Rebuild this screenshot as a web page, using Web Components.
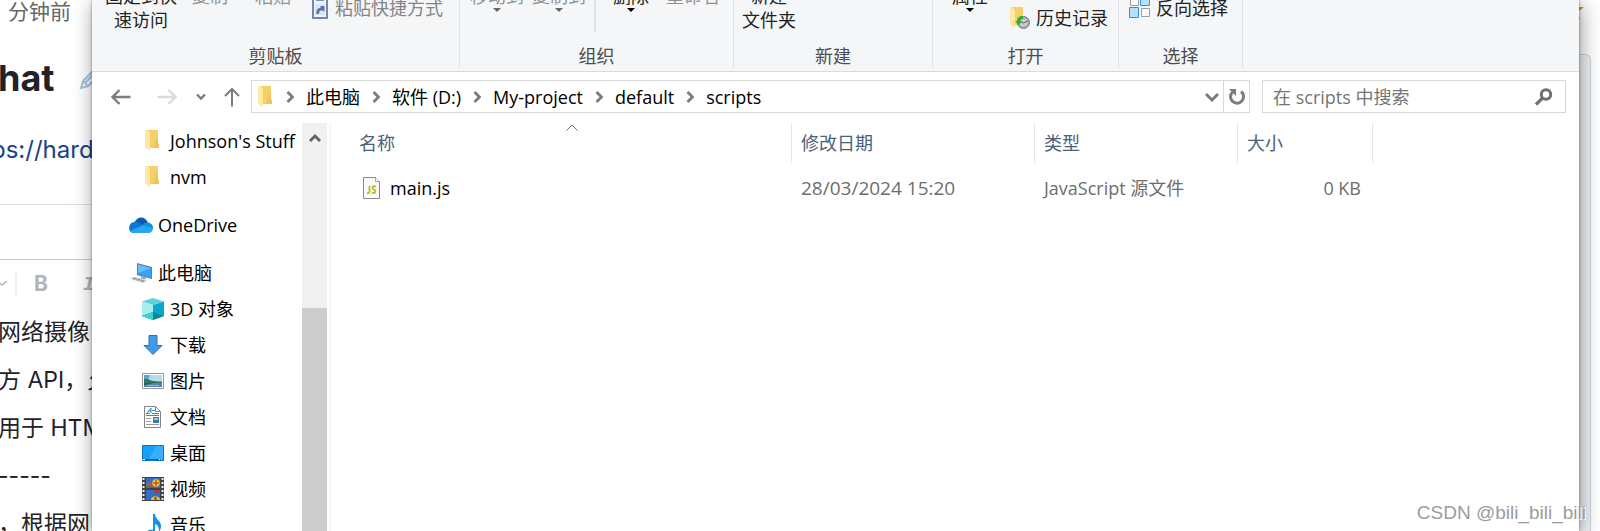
<!DOCTYPE html>
<html lang="zh-CN">
<head>
<meta charset="UTF-8">
<meta name="viewport" content="width=device-width, initial-scale=1">
<title>scripts</title>
<style>
    html, body {
        height: 100%;
        margin: 0;
        overflow: hidden;
    }
    body {
        position: relative;
        background: #fff;
        color: #000;
        font: 18px/24px "Open Sans", "Noto Sans CJK SC", sans-serif;
    }
    file-window {
        position: absolute;
        inset: 0 21px 0 92px;
    }
    .watermark {
        position: absolute;
        right: 14px;
        bottom: 6px;
        font: 19px/24px "Liberation Sans", sans-serif;
        color: #9c9c9c;
        text-shadow: 1px 1px 0 #fff;
    }
</style>
</head>
<body>
<article-page></article-page>

<file-window>
    <ribbon-group slot="ribbon" label="剪贴板" style="--w: 368px; --start: 12px">
        <ribbon-button top="固定到快" bottom="速访问" style="--bw: 74px"></ribbon-button>
        <ribbon-button top="复制" muted style="--bw: 64px"></ribbon-button>
        <ribbon-button top="粘贴" muted style="--bw: 62px"></ribbon-button>
        <ribbon-small icon="shortcut" text="粘贴快捷方式" muted style="--drop: 12px"></ribbon-small>
    </ribbon-group>
    <ribbon-group slot="ribbon" label="组织" style="--w: 274px; --start: 6px">
        <ribbon-button top="移动到" arrow muted style="--bw: 62px"></ribbon-button>
        <ribbon-button top="复制到" arrow muted style="--bw: 62px"></ribbon-button>
        <ribbon-line></ribbon-line>
        <ribbon-button top="删除" arrow style="--bw: 62px"></ribbon-button>
        <ribbon-button top="重命名" muted style="--bw: 62px"></ribbon-button>
    </ribbon-group>
    <ribbon-group slot="ribbon" label="新建" style="--w: 199px; --start: 4px">
        <ribbon-button top="新建" bottom="文件夹" style="--bw: 62px"></ribbon-button>
    </ribbon-group>
    <ribbon-group slot="ribbon" label="打开" style="--w: 186px; --start: 6px">
        <ribbon-button top="属性" arrow style="--bw: 62px"></ribbon-button>
        <ribbon-small icon="history" text="历史记录" style="--drop: 2px"></ribbon-small>
    </ribbon-group>
    <ribbon-group slot="ribbon" label="选择" style="--w: 124px; --start: 2px">
        <ribbon-small icon="invert" text="反向选择" style="--drop: 12px"></ribbon-small>
    </ribbon-group>

    <address-bar slot="address" path="此电脑|软件 (D:)|My-project|default|scripts"></address-bar>

    <nav-item slot="tree" icon="folder" level="2">Johnson's Stuff</nav-item>
    <nav-item slot="tree" icon="folder" level="2">nvm</nav-item>
    <nav-item slot="tree" icon="cloud" level="1">OneDrive</nav-item>
    <nav-item slot="tree" icon="computer" level="1">此电脑</nav-item>
    <nav-item slot="tree" icon="cube" level="2">3D 对象</nav-item>
    <nav-item slot="tree" icon="download" level="2">下载</nav-item>
    <nav-item slot="tree" icon="picture" level="2">图片</nav-item>
    <nav-item slot="tree" icon="document" level="2">文档</nav-item>
    <nav-item slot="tree" icon="desktop" level="2">桌面</nav-item>
    <nav-item slot="tree" icon="video" level="2">视频</nav-item>
    <nav-item slot="tree" icon="music" level="2">音乐</nav-item>

    <file-list slot="files"></file-list>
</file-window>

<div class="watermark">CSDN @bili_bili_bili</div>

<script>
    // icon name -> [width, height, drawing]
    const ICONS = {
        folder: [14, 22, `<path d="M3 0h10v13l1 1v4H3z" fill="#f5cf69"/><path d="M11 8h2v6h1v4H8z" fill="#efc458"/><path d="M0 0h2l3 2.500V21L0 17.500z" fill="#ffe9a2"/>`],
        cloud: [24, 16, `<path d="M5 7C7-1 16-2 19 6l-6 4z" fill="#0a5cb4"/><path d="M5.500 5C10 4 13 9 16 10L5 16C-2 16-1 5 5.500 5z" fill="#0f78d4"/><path d="M13 8.500C17 4 24 5 24 11c0 3-2 5-5 5H5c-1 0-3-1-4-2z" fill="#28a8ea"/><path d="M13 8.500C15 6 17 5.500 19 5.700c3 .3 5 3 5 5.300z" fill="#1490df"/>`],
        computer: [24, 22, `<path d="M8 1l15 4v12L8 13z" fill="#5a7f9f"/><path d="M9 2.500l13 3.500v9.500L9 12z" fill="#36a5f5"/><path d="M9 2.500l13 3.500-13 5z" fill="#69bdfb"/><path d="M12 14l5 1.500v2l-5-1z" fill="#a3a8ad"/><path d="M1 16.500l4-1.500 13 3.500-4 2.500z" fill="#c3c9ce"/><path d="M4 16l11 3M7 16l-3 2M11 17l-3 2M15 18l-3 2" stroke="#858d94" stroke-width=".7"/>`],
        cube: [22, 22, `<path d="M0 3.500L11 0l11 3.500L11 7z" fill="#5fd3dc"/><path d="M0 3.500L11 7v15L0 18z" fill="#a5eef0"/><path d="M22 3.500L11 7v15l11-4z" fill="#08a9cd"/><path d="M0 18l11-4 11 4-11 4z" fill="#10849a"/><path d="M0 18l11-4v8z" fill="#3bced5"/>`],
        download: [22, 22, `<path d="M7 1.500h8v10h5L11 20.500 2 11.500h5z" fill="#3f9bea" stroke="#2376ba"/>`],
        picture: [22, 22, `<path d="M.5 3.500h21v15H.5z" fill="#fff" stroke="#969696"/><path d="M2 5h18v12H2z" fill="#5ba5df"/><path d="M8 5h12v6H6z" fill="#b8daf0"/><path d="M2 9c4-1 5 2 10 2 3 1 6 1 8 1v1H2z" fill="#38755b"/><path d="M2 13h18v4H2z" fill="#4f84ad"/><path d="M2 13c3 0 6 0 9-1v1c-3 1-6 2-9 2z" fill="#2e5c55"/><path d="M5 15h12v1H5z" fill="#8ab6cf"/>`],
        document: [22, 22, `<path d="M2.500.5h11l5 5v16h-16z" fill="#fff" stroke="#858585"/><path d="M13.500.5v5h5" fill="none" stroke="#858585"/><path d="M4 7.500h4M5 7l4-5v5M6 5h3M10 4.500h3M10 7.500h7M4 9.500h13" fill="none" stroke="#288ecf"/><path d="M4 12.500h5M4 15.500h5M4 18.500h13" stroke="#9a9a9a"/><path d="M11 11h6v6h-6z" fill="#3e7898"/><path d="M12 12h4v2h-4z" fill="#9fcae7"/>`],
        desktop: [22, 22, `<path d="M.5 3.500h21v15H.5z" fill="#16a0fb" stroke="#0876bb"/><path d="M14 4h7v13H7z" fill="#37affc"/><path d="M1 17.500h20" stroke="#07569a"/><path d="M1 17.500h2M17 17.500h1M19 17.500h1" stroke="#fff"/>`],
        video: [22, 24, `<path d="M0 0h22v24H0z" fill="#414141"/><path d="M1.500 1v22M20.500 1v22" stroke="#eee" stroke-width="2" stroke-dasharray="2 2"/><path d="M4 1h14v10H4zM4 13h14v10H4z" fill="#366ec7"/><path d="M4 8l3-3 4 4v1H4z" fill="#d64657"/><circle cx="14" cy="6" r="3.800" fill="#f0c42d"/><path d="M14 3v6M11 6h6" stroke="#a93226"/><path d="M12 10h3v1h-3zM4 9h6v2H4z" fill="#318851"/><path d="M12 13h6l-3 4z" fill="#c3302f"/><path d="M9 23c0-5 9-5 9 0z" fill="#f1bf29"/><path d="M13.500 20v3" stroke="#b62e24" stroke-width="2"/>`],
        music: [22, 24, `<path d="M11 1h2c0 5 6 6 6 12 0 3-1 4-2 6 0-5-1-7-4-8v8c0 5-8 5-8 1 0-3 3-4 6-3z" fill="#1592e5"/>`],
        js: [18, 22, `<path d="M.5.5h12l4 4v17H.5z" fill="#f9f9f9" stroke="#898989"/><path d="M12.500.5v4h4" fill="#fff" stroke="#a5a5a5"/><path d="M6.500 9v5.500c0 1.500-1 2-2.500 1.500M13 9.800c-3-1.500-5 1.200-2 2.700 3 1.500 1 4.500-2 3" fill="none" stroke="#b7bb2d" stroke-width="1.800"/>`],
        shortcut: [17, 24, `<path d="M1 2h14v20H1z" fill="#eef3f9" stroke="#7187ad" stroke-width="2"/><path d="M4 0h8v5H4z" fill="#8295b8"/><path d="M3 8h10v11H3z" fill="#dce6f3"/><path d="M4.500 18c-.5-4 1-6 4-6v-2h4v6l-1.500-1.500C8 14 7 15 7 18z" fill="#5877a8"/>`],
        history: [21, 24, `<path d="M3 1h11v18H3z" fill="#f5cf69"/><path d="M1 1h2l3 3v18l-5-3z" fill="#ffe9a2"/><circle cx="14.500" cy="16.500" r="6" fill="#a4a9ab" stroke="#777d80"/><circle cx="14.500" cy="16.500" r="4" fill="#c6cacb"/><path d="M11 15l3.500 2 4-2" fill="none" stroke="#5b6062"/><path d="M14 10c-4 0-6 2-6 5H6l4 4 3-4h-2c0-1 1-2 3-2z" fill="#2eae3c"/>`],
        invert: [21, 24, `<path d="M1.500 1.500h8v8h-8z" fill="#fafafa" stroke="#9c9c9c"/><path d="M11.500 .5h9v9h-9z" fill="#b7e0ff" stroke="#2e91dd"/><path d="M.5 11.500h9v10h-9z" fill="#b7e0ff" stroke="#2e91dd"/><path d="M12.500 12.500h8v8h-8z" fill="#fafafa" stroke="#9c9c9c"/>`],
        back: [20, 18, `<path d="M19.500 9H2M8.500 2L1.500 9l7 7" fill="none" stroke="#7c7c7c" stroke-width="2.400"/>`],
        forward: [20, 18, `<path d="M.5 9H18M11.500 2l7 7-7 7" fill="none" stroke="#dadada" stroke-width="2.400"/>`],
        recent: [10, 8, `<path d="M1 1.500l4 4 4-4" fill="none" stroke="#7c7c7c" stroke-width="2.400"/>`],
        up: [16, 20, `<path d="M8 19.500V2M1 9l7-7 7 7" fill="none" stroke="#7c7c7c" stroke-width="2"/>`],
        crumb: [8, 12, `<path d="M1.500 1l5 5-5 5" fill="none" stroke="#7c7c7c" stroke-width="2.800"/>`],
        down: [14, 10, `<path d="M1 2l6 6 6-6" fill="none" stroke="#7c7c7c" stroke-width="3"/>`],
        refresh: [18, 18, `<path d="M13 3.500a6.500 6.500 0 1 1-8.500 .5" fill="none" stroke="#7c7c7c" stroke-width="3"/><path d="M1 1h7v7z" fill="#7c7c7c"/>`],
        search: [18, 18, `<circle cx="11" cy="6.500" r="4.700" fill="none" stroke="#707070" stroke-width="3"/><path d="M7.500 10L1 16.500" stroke="#707070" stroke-width="3.200"/>`],
        scroll: [12, 10, `<path d="M1 8l5-5 5 5" fill="none" stroke="#606060" stroke-width="2.800"/>`],
        sort: [12, 7, `<path d="M.5 6.500L6 1l5.500 5.500" fill="none" stroke="#707070"/>`],
        pencil: [24, 24, `<path d="M2 22l2-7L17 2l5 5L9 20zM4 15l5 5M6 17L18 5" fill="none" stroke="#a9c4dc" stroke-width="2"/>`],
        star: [20, 20, `<path d="M10 0l3 7h7l-6 5 2 8-6-5-6 5 2-8-6-5h7z" fill="#e2940c"/>`],
        caret: [8, 6, `<path d="M-3 0l5 4 5-4" fill="none" stroke="#b4b4b4" stroke-width="1.500"/>`],
    };

    function icon(name) {
        const [w, h, body] = ICONS[name];
        return `<svg width="${w}" height="${h}" viewBox="0 0 ${w} ${h}" aria-hidden="true">${body}</svg>`;
    }

    // Shared reset for the buttons and links inside the shadow roots
    const BASE = `
        :host, * { box-sizing: border-box; }
        svg { display: block; flex: none; }
        button { margin: 0; padding: 0; border: 0; background: none; font: inherit; color: inherit; }
        a { color: inherit; text-decoration: none; }
    `;

    // The web page that stays visible around the window
    class ArticlePage extends HTMLElement {
        constructor() {
            super();
            this.attachShadow({ mode: 'open' });
            this.shadowRoot.innerHTML = `
                <style>
                    ${BASE}
                    :host {
                        display: grid;
                        grid-template-columns: 1fr 30px;
                        height: 100%;
                        overflow: hidden;
                        color: #1f2328;
                        font-family: Inter, "Noto Sans CJK SC", sans-serif;
                    }
                    main { white-space: nowrap; overflow: hidden; }
                    .time { height: 48px; padding-left: 8px; font-size: 21px; line-height: 24px; color: #666; }
                    .title { display: flex; align-items: center; gap: 24px; height: 60px; }
                    h1 { margin: 0 0 0 -2px; font-size: 36px; line-height: 60px; font-weight: 700; }
                    .link { height: 97px; margin-left: -9px; padding-top: 24px; font-size: 24px; line-height: 36px; color: #15438b; border-bottom: 1px solid #d8e0e8; }
                    .gap { height: 55px; border-bottom: 1px solid #b9c9d6; }
                    .tools { display: flex; align-items: center; height: 48px; font-size: 21px; color: #b4b4b4; }
                    .tools button { width: 48px; text-align: center; }
                    .tools span { width: 9px; height: 24px; border-right: 2px solid #eee; }
                    b { font-weight: 700; }
                    i { font-family: "Liberation Mono", monospace; font-weight: 700; }
                    p { margin: 0 0 0 -2px; font-size: 23px; line-height: 48px; }
                    aside { display: flex; flex-direction: column; background: #fff; }
                    .star { height: 54px; margin-left: -6px; }
                    .panel { flex: 1; width: 21px; border: 1px solid #ccd5df; border-left: 0; border-bottom: 0; border-radius: 0 6px 0 0; background: #f3f4f7; }
                </style>
                <main>
                    <div class="time">分钟前</div>
                    <div class="title"><h1>hat</h1>${icon('pencil')}</div>
                    <div class="link"><a href="#">ps://hard</a></div>
                    <div class="gap"></div>
                    <div class="tools">
                        ${icon('caret')}<span></span>
                        <button type="button" aria-label="加粗"><b>B</b></button>
                        <button type="button" aria-label="斜体"><i>I</i></button>
                    </div>
                    <p>网络摄像</p>
                    <p>方 API，允</p>
                    <p>用于 HTML</p>
                    <p>-----</p>
                    <p>，根据网</p>
                </main>
                <aside>
                    <div class="star">${icon('star')}</div>
                    <div class="panel"></div>
                </aside>
            `;
        }
    }

    class FileWindow extends HTMLElement {
        constructor() {
            super();
            this.attachShadow({ mode: 'open' });
            this.shadowRoot.innerHTML = `
                <style>
                    ${BASE}
                    :host {
                        display: flex;
                        flex-direction: column;
                        background: #fff;
                        box-shadow: 0 0 3px rgba(0, 0, 0, .4), 2px 4px 20px rgba(0, 0, 0, .4);
                    }
                    .ribbon {
                        display: flex;
                        flex: none;
                        height: 72px;
                        padding-bottom: 3px;
                        overflow: hidden;
                        background: #f4f6f8;
                        border-bottom: 1px solid #dadbdc;
                    }
                    .content { display: flex; flex: 1; min-height: 0; }
                    .tree { width: 210px; overflow: hidden; }
                    .scroll { display: flex; flex-direction: column; align-items: center; width: 25px; background: #f0f0f0; }
                    .scroll button { display: flex; align-items: center; justify-content: center; width: 25px; height: 29px; flex: none; }
                    .thumb { width: 25px; flex: 1; margin-top: 156px; background: #cdcdcd; }
                    .edge { width: 2px; margin-left: 2px; background: #f7f7f7; }
                    .files { flex: 1; min-width: 0; }
                </style>
                <div class="ribbon"><slot name="ribbon"></slot></div>
                <slot name="address"></slot>
                <div class="content">
                    <nav class="tree"><slot name="tree"></slot></nav>
                    <div class="scroll">
                        <button type="button" aria-label="向上滚动">${icon('scroll')}</button>
                        <div class="thumb"></div>
                    </div>
                    <div class="edge"></div>
                    <div class="files"><slot name="files"></slot></div>
                </div>
            `;
        }
    }

    class RibbonGroup extends HTMLElement {
        constructor() {
            super();
            this.attachShadow({ mode: 'open' });
            this.shadowRoot.innerHTML = `
                <style>
                    ${BASE}
                    :host {
                        display: flex;
                        flex-direction: column;
                        justify-content: flex-end;
                        width: var(--w);
                        border-right: 1px solid #e0e2e4;
                    }
                    .items { display: flex; align-items: flex-end; padding-left: var(--start); color: #222; }
                    .label { padding-top: 12px; text-align: center; color: #4c4c4c; }
                </style>
                <div class="items"><slot></slot></div>
                <div class="label">${this.getAttribute('label')}</div>
            `;
        }
    }

    // Large button: two lines of text, or one line and a drop-down mark
    class RibbonButton extends HTMLElement {
        constructor() {
            super();
            this.attachShadow({ mode: 'open' });
            const muted = this.hasAttribute('muted');
            this.shadowRoot.innerHTML = `
                <style>
                    ${BASE}
                    :host { display: block; width: var(--bw); white-space: nowrap; color: ${muted ? '#929292' : '#222'}; }
                    button { display: flex; flex-direction: column; align-items: center; width: 100%; height: 48px; }
                    .mark { border: solid transparent; border-width: 4px 4px 0; border-top-color: ${muted ? '#666' : '#000'}; }
                </style>
                <button type="button">
                    <span>${this.getAttribute('top')}</span>
                    ${this.hasAttribute('bottom') ? `<span>${this.getAttribute('bottom')}</span>` : ''}
                    ${this.hasAttribute('arrow') ? '<span class="mark"></span>' : ''}
                </button>
            `;
        }
    }

    // Small button: icon on the left, text on the right
    class RibbonSmall extends HTMLElement {
        constructor() {
            super();
            this.attachShadow({ mode: 'open' });
            this.shadowRoot.innerHTML = `
                <style>
                    ${BASE}
                    :host { display: block; padding: 0 0 var(--drop) 8px; white-space: nowrap; color: ${this.hasAttribute('muted') ? '#858585' : '#222'}; }
                    button { display: flex; align-items: center; gap: 6px; }
                </style>
                <button type="button">${icon(this.getAttribute('icon'))}<span>${this.getAttribute('text')}</span></button>
            `;
        }
    }

    class RibbonLine extends HTMLElement {
        constructor() {
            super();
            this.attachShadow({ mode: 'open' });
            this.shadowRoot.innerHTML = `
                <style>
                    :host { display: block; width: 2px; height: 48px; margin: 0 4px; background: #dfe1e3; }
                </style>
            `;
        }
    }

    class AddressBar extends HTMLElement {
        constructor() {
            super();
            this.attachShadow({ mode: 'open' });
            const crumbs = this.getAttribute('path').split('|')
                .map(name => `${icon('crumb')}<a href="#">${name}</a>`)
                .join('');
            this.shadowRoot.innerHTML = `
                <style>
                    ${BASE}
                    :host { display: flex; flex: none; height: 51px; padding: 8px 13px 10px 19px; }
                    .history { display: flex; align-items: center; width: 140px; }
                    .history button:nth-child(2) { margin-left: 26px; }
                    .history button:nth-child(3) { margin-left: 19px; }
                    .history button:nth-child(4) { margin-left: 18px; }
                    .box { display: flex; flex: 1; align-items: center; height: 33px; border: 1px solid #d9d9d9; }
                    .path { display: flex; flex: 1; align-items: center; gap: 12px; padding-left: 6px; white-space: nowrap; }
                    .path svg:first-child { margin-right: 2px; }
                    .reload { display: flex; align-items: center; justify-content: center; width: 26px; height: 31px; margin-left: 4px; border-left: 1px solid #d9d9d9; }
                    .find { display: flex; align-items: center; width: 304px; height: 33px; margin-left: 12px; padding: 0 12px 0 10px; border: 1px solid #d9d9d9; }
                    input { flex: 1; min-width: 0; padding: 0; border: 0; outline: 0; background: none; font: inherit; }
                    input::placeholder { color: #757575; opacity: 1; }
                </style>
                <div class="history">
                    <button type="button" aria-label="后退">${icon('back')}</button>
                    <button type="button" aria-label="前进">${icon('forward')}</button>
                    <button type="button" aria-label="最近浏览的位置">${icon('recent')}</button>
                    <button type="button" aria-label="上移">${icon('up')}</button>
                </div>
                <div class="box">
                    <nav class="path">${icon('folder')}${crumbs}</nav>
                    <button type="button" aria-label="以前的位置">${icon('down')}</button>
                    <button class="reload" type="button" aria-label="刷新">${icon('refresh')}</button>
                </div>
                <div class="find">
                    <input type="text" placeholder="在 scripts 中搜索" aria-label="搜索">
                    ${icon('search')}
                </div>
            `;
        }
    }

    class NavItem extends HTMLElement {
        constructor() {
            super();
            this.attachShadow({ mode: 'open' });
            const top = this.getAttribute('level') === '1';
            this.shadowRoot.innerHTML = `
                <style>
                    ${BASE}
                    :host { display: block; padding: ${top ? '12px 0 0 37px' : '0 0 0 50px'}; white-space: nowrap; }
                    a { display: flex; align-items: center; gap: ${top ? 5 : 6}px; height: 36px; }
                    .icon { display: flex; width: ${top ? 24 : 22}px; }
                    .icon.folder { padding-left: 3px; }
                </style>
                <a href="#"><span class="icon ${this.getAttribute('icon')}">${icon(this.getAttribute('icon'))}</span><slot></slot></a>
            `;
        }
    }

    class FileList extends HTMLElement {
        constructor() {
            super();
            this.attachShadow({ mode: 'open' });
            this.shadowRoot.innerHTML = `
                <style>
                    ${BASE}
                    :host { display: block; }
                    table { table-layout: fixed; width: 1042px; border-collapse: separate; border-spacing: 0; }
                    th, td { padding: 0 12px 0 9px; text-align: left; font-weight: 400; white-space: nowrap; }
                    th { height: 40px; border-right: 1px solid #e5e5e5; color: #4c607a; }
                    th:first-child, td:first-child { padding-left: 28px; }
                    td { height: 50px; color: #6d6d6d; }
                    td:last-child { text-align: right; }
                    .sorted { position: relative; }
                    .sorted svg { position: absolute; top: 1px; left: 51%; }
                    .name { display: flex; align-items: center; gap: 9px; padding-left: 4px; color: #000; }
                    .date { font-size: 19px; }
                </style>
                <table>
                    <colgroup><col style="width: 461px"><col style="width: 243px"><col style="width: 203px"><col></colgroup>
                    <thead>
                        <tr><th class="sorted">名称${icon('sort')}</th><th>修改日期</th><th>类型</th><th>大小</th></tr>
                    </thead>
                    <tbody>
                        <tr>
                            <td><span class="name">${icon('js')}main.js</span></td>
                            <td class="date">28/03/2024 15:20</td>
                            <td>JavaScript 源文件</td>
                            <td>0 KB</td>
                        </tr>
                    </tbody>
                </table>
            `;
        }
    }

    customElements.define('article-page', ArticlePage);
    customElements.define('file-window', FileWindow);
    customElements.define('ribbon-group', RibbonGroup);
    customElements.define('ribbon-button', RibbonButton);
    customElements.define('ribbon-small', RibbonSmall);
    customElements.define('ribbon-line', RibbonLine);
    customElements.define('address-bar', AddressBar);
    customElements.define('nav-item', NavItem);
    customElements.define('file-list', FileList);
</script>
</body>
</html>
